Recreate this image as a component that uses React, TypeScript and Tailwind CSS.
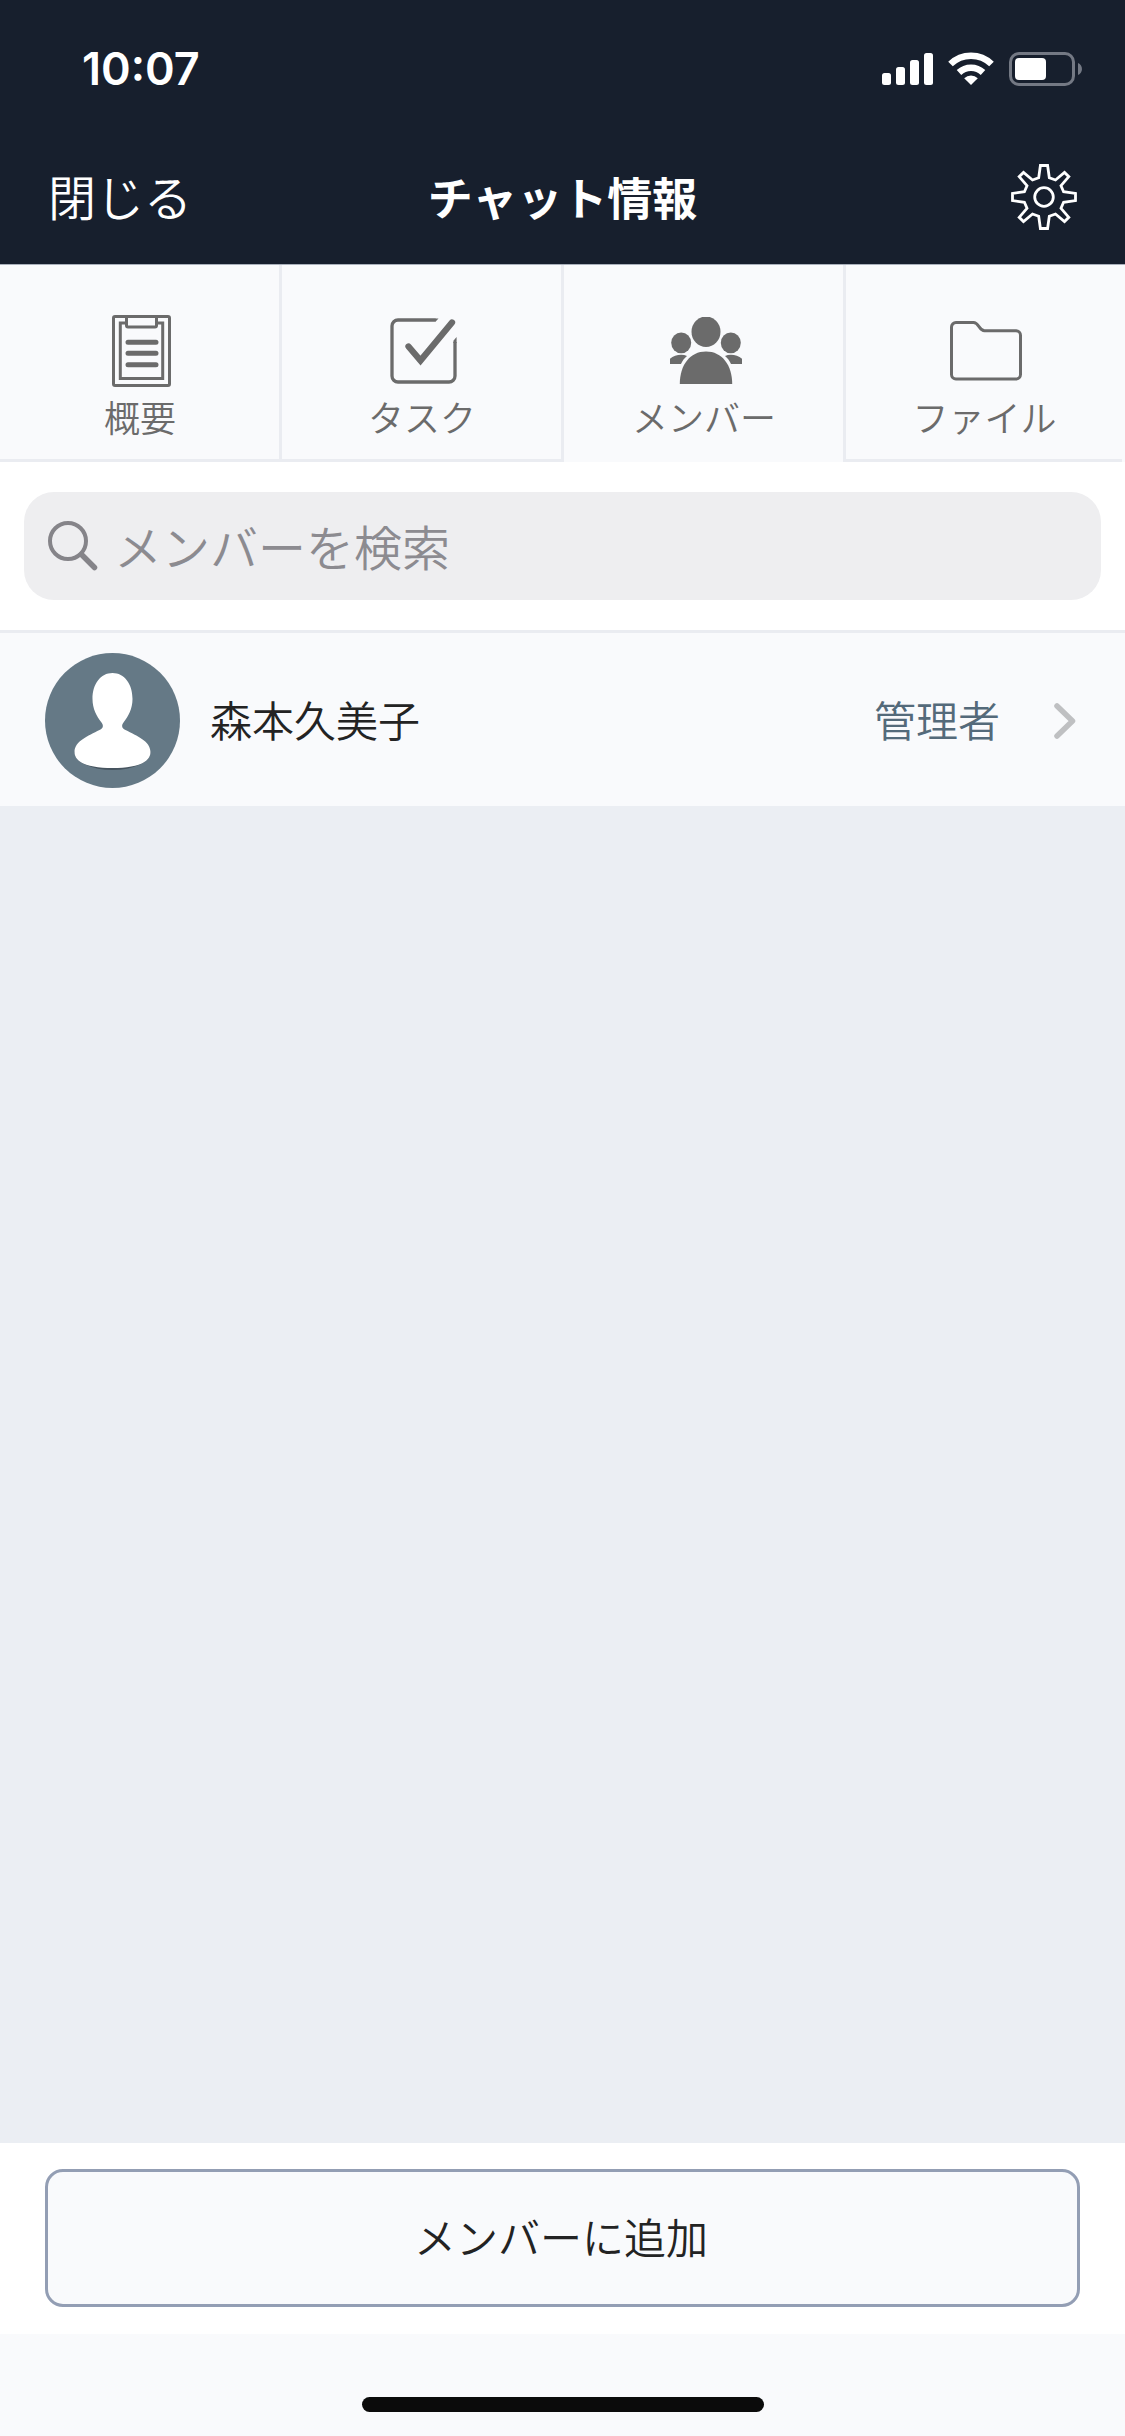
import type { ReactNode } from "react";

const ClipboardIcon = () => (
  <svg width="60" height="72" viewBox="0 0 60 72" fill="none" stroke="#6b6b6b" strokeWidth="3">
    <rect x="1.5" y="1.5" width="56" height="69" rx="1.5" />
    <path d="M14 8H8.3v55.5h42.4V8H45" />
    <path d="M14.5 2v8.5a1.5 1.5 0 0 0 1.5 1.5h27a1.5 1.5 0 0 0 1.5-1.5V2" />
    <path d="M16 27.3h28M16 38.2h28M16 49.7h28" strokeWidth="5" strokeLinecap="round" />
  </svg>
);

const TaskIcon = () => (
  <svg width="68" height="68" viewBox="0 0 68 68" fill="none" stroke="#6b6b6b" strokeWidth="3.3">
    <path d="M45.5 3H8a6 6 0 0 0-6 6v50a6 6 0 0 0 6 6h51a6 6 0 0 0 6-6V25" />
    <path d="M45 1.400h3.500l-2.800 3.200H45ZM63.400 26v-2.200l3.200-3.800v6Z" fill="#6b6b6b" stroke="none" />
    <path d="m18.500 29.500 12 14L62 5.500" strokeWidth="6.300" strokeLinecap="round" />
  </svg>
);

const MembersIcon = () => (
  <svg width="72" height="68" viewBox="0 0 72 68" fill="#6b6b6b">
    <ellipse cx="36" cy="14.700" rx="14.500" ry="15.200" />
    <ellipse cx="11.200" cy="25.800" rx="10" ry="10.400" />
    <ellipse cx="60.800" cy="25.800" rx="10" ry="10.400" />
    <path d="M9.800 67C9.800 48 20 34.500 36 34.500s26.200 13.500 26.200 32.500Z" />
    <path d="M0 47v-5.200c4.500-4 12-5 17-2.800-2.600 2-4.600 4.700-6 8Z" />
    <path d="M72 47v-5.200c-4.500-4-12-5-17-2.800 2.600 2 4.600 4.700 6 8Z" />
  </svg>
);

const FolderIcon = () => (
  <svg width="72" height="60" viewBox="0 0 72 60" fill="none" stroke="#6b6b6b" strokeWidth="3">
    <path d="M6 1.500h17.500c5.500 0 5.500 8.200 11 8.200H66a4.500 4.500 0 0 1 4.500 4.500V53.500A4.500 4.500 0 0 1 66 58H6a4.500 4.500 0 0 1-4.500-4.500V6A4.500 4.500 0 0 1 6 1.500Z" />
  </svg>
);

const GearIcon = () => (
  <svg width="66" height="66" viewBox="-33 -33 66 66" fill="none" stroke="#fff" strokeWidth="2.800">
    <path d="M-3.600-31.500H3.600L5.300-19.300 11.500-17 20.500-24.500 24.800-20.300 17-11.300 19.600-5.300 31.500-3.600V3.600L19.600 5.300 17 11.300 24.800 20.300 20.500 24.500 11.500 17 5.300 19.300 3.600 31.500H-3.600L-5.300 19.300-11.500 17-20.500 24.500-24.800 20.300-17 11.300-19.600 5.300-31.500 3.600V-3.600L-19.600-5.300-17-11.300-24.800-20.300-20.500-24.500-11.500-17-5.300-19.300Z" />
    <circle r="9.300" />
  </svg>
);

const StatusIcons = () => (
  <div className="flex items-center">
    <svg width="51" height="34" viewBox="0 0 51 34" fill="#fff">
      <rect y="21" width="9" height="12" rx="2.500" />
      <rect x="14" y="15" width="9" height="18" rx="2.500" />
      <rect x="28" y="8" width="9" height="25" rx="2.500" />
      <rect x="42" y="1" width="9" height="32" rx="2.500" />
    </svg>
    <svg className="ml-[15px]" width="46" height="34" viewBox="0 0 46 34">
      <path d="M2.500 12a29.500 29.500 0 0 1 41 0M11 20.500a17.500 17.500 0 0 1 24 0" fill="none" stroke="#fff" strokeWidth="6.600" />
      <path d="M23 33l-6.800-6.800a10 10 0 0 1 13.600 0Z" fill="#fff" />
    </svg>
    <svg className="ml-[15px]" width="73" height="34" viewBox="0 0 73 34">
      <rect x="1.500" y="1.500" width="63" height="31" rx="8.500" fill="none" stroke="#747984" strokeWidth="3" />
      <rect x="6" y="6" width="31" height="22" rx="4" fill="#fff" />
      <path d="M69 11c5.300 2.200 5.300 10 0 12Z" fill="#747984" />
    </svg>
  </div>
);

const AvatarIcon = () => (
  <svg width="135" height="135" viewBox="0 0 135 135">
    <circle cx="67.500" cy="67.500" r="67.500" fill="#657986" />
    <ellipse cx="67.500" cy="99.500" rx="38" ry="17.500" fill="#46545f" />
    <path
      d="M67.500 20C55.500 20 47.500 31 47.500 46c0 9.500 4 17 9 23.500 2.500 3.500 1.500 5.500-2 7.500C43 83 29.500 88 29.500 99c0 11.500 16 16 38 16s38-4.500 38-16c0-11-13.500-16-25-22-3.500-2-4.500-4-2-7.500 5-6.500 9-14 9-23.500C87.500 31 79.500 20 67.500 20Z"
      fill="#fff"
    />
  </svg>
);

const tabs: { label: string; icon: ReactNode; active?: boolean }[] = [
  { label: "概要", icon: <ClipboardIcon /> },
  { label: "タスク", icon: <TaskIcon /> },
  { label: "メンバー", icon: <MembersIcon />, active: true },
  { label: "ファイル", icon: <FolderIcon /> },
];

const members = [{ name: "森本久美子", role: "管理者" }];

const Header = () => {
  return (
    <header className="h-[264px] bg-[#171f2d] text-white">
      <div className="flex h-[138px] items-center justify-between pr-[43px] pl-[82px]">
        <span className="font-['Inter'] text-[45px] font-semibold">10:07</span>
        <StatusIcons />
      </div>
      <div className="grid h-[118px] grid-cols-3 items-center px-12">
        <button className="justify-self-start pb-[5px] text-[48px]">閉じる</button>
        <h1 className="justify-self-center text-[45px] font-bold whitespace-nowrap">チャット情報</h1>
        <button className="justify-self-end">
          <GearIcon />
        </button>
      </div>
    </header>
  );
};

const TabBar = () => {
  return (
    <nav className="flex h-[198px] border-t border-[#a9b0bb] bg-[#f9fafc] pr-[3px]">
      {tabs.map((tab) => (
        <button
          key={tab.label}
          className={`flex w-[282px] flex-col items-center border-r-[3px] border-[#eaecf1] pt-[46px] last:w-[276px] last:border-r-0 ${
            tab.active ? "" : "border-b-[3px]"
          }`}
        >
          <span className="flex h-[80px] items-center pl-[4px]">{tab.icon}</span>
          <span className="mt-px pl-px text-[36px] leading-[48px] text-[#6b6b6b]">{tab.label}</span>
        </button>
      ))}
    </nav>
  );
};

const SearchBar = () => {
  return (
    <div className="border-b-[3px] border-[#eaecf1] bg-white px-6 py-[30px]">
      <div className="flex h-[108px] items-center rounded-[30px] bg-[#eeeef0] pl-6">
        <svg width="50" height="50" viewBox="0 0 50 50" fill="none" stroke="#858489">
          <circle cx="20" cy="20" r="18" strokeWidth="4" />
          <path d="m33.500 33.500 13 13" strokeWidth="5.500" strokeLinecap="round" />
        </svg>
        <span className="ml-4 pb-[3px] text-[48px] text-[#8c8b90]">メンバーを検索</span>
      </div>
    </div>
  );
};

const MemberList = () => {
  return (
    <ul className="flex-1 bg-[#ebeef3]">
      {members.map((member) => (
        <li key={member.name} className="flex h-[173px] items-center bg-[#f9fafc] pt-[2px] pr-[49px] pl-[45px]">
          <AvatarIcon />
          <span className="ml-[30px] pb-[5px] text-[42px] text-[#232323]">{member.name}</span>
          <span className="ml-auto pb-[5px] text-[42px] text-[#546a7a]">{member.role}</span>
          <svg className="ml-[54px]" width="22" height="36" viewBox="0 0 22 36" fill="none" stroke="#bfc0c2" strokeWidth="5.500">
            <path d="m3 3 15.500 15L3 33" strokeLinecap="round" strokeLinejoin="round" />
          </svg>
        </li>
      ))}
    </ul>
  );
};

export default function App() {
  return (
    <div className="flex h-[2436px] w-[1125px] flex-col overflow-hidden bg-[#f9fafc] font-['Noto_Sans_CJK_JP',sans-serif] font-[350]">
      <Header />
      <TabBar />
      <SearchBar />
      <MemberList />
      <div className="h-[191px] bg-white px-[45px] pt-[26px]">
        <button className="flex h-[138px] w-full items-center justify-center rounded-[18px] border-[3px] border-[#939eb4] bg-[#f9fafc] pr-[3px] pb-[5px] text-[42px] text-[#232323]">
          メンバーに追加
        </button>
      </div>
      <div className="flex h-[102px] items-end justify-center pb-6">
        <div className="h-[15px] w-[402px] rounded-full bg-[#0b0b0b]" />
      </div>
    </div>
  );
}
